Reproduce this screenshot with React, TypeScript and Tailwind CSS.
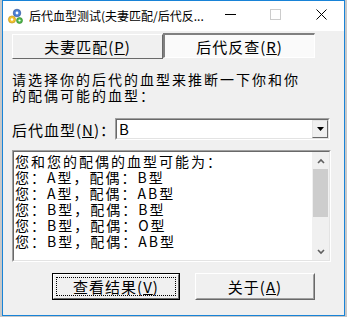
import React from "react";

const font = { fontFamily: '"Noto Sans CJK SC", "Noto Sans", sans-serif' };

function GearsIcon() {
  return (
    <svg width="17" height="17" viewBox="0 0 17 17">
      <g fill="#f2c12e" stroke="#b08a10" strokeWidth="0.6">
        <circle cx="5" cy="11.5" r="3.6" />
      </g>
      <circle cx="5" cy="11.5" r="1.3" fill="#fff" />
      <g fill="#4b7fd6" stroke="#2a4f94" strokeWidth="0.6">
        <circle cx="10" cy="5" r="3.8" />
      </g>
      <circle cx="10" cy="5" r="1.4" fill="#fff" />
      <g fill="#4fb84a" stroke="#2c7a28" strokeWidth="0.6">
        <circle cx="12.5" cy="12.5" r="3" />
      </g>
      <circle cx="12.5" cy="12.5" r="1.1" fill="#fff" />
    </svg>
  );
}

function TitleBar() {
  return (
    <div className="h-[30px] bg-white flex items-center relative">
      <div className="ml-[4px] mt-[1px]">
        <GearsIcon />
      </div>
      <span className="ml-[5px] text-[12px] text-black leading-none">
        后代血型测试(夫妻匹配/后代反...
      </span>
      <svg className="absolute left-[222px] top-[9px]" width="12" height="10" viewBox="0 0 12 10">
        <line x1="0" y1="4.5" x2="11" y2="4.5" stroke="#000" strokeWidth="1" />
      </svg>
      <svg className="absolute left-[267px] top-[8px]" width="11" height="11" viewBox="0 0 11 11">
        <rect x="0.5" y="0.5" width="10" height="10" fill="none" stroke="#cccccc" strokeWidth="1" />
      </svg>
      <svg className="absolute left-[313px] top-[8px]" width="11" height="11" viewBox="0 0 11 11">
        <path d="M0.5 0.5 L10.5 10.5 M10.5 0.5 L0.5 10.5" stroke="#000" strokeWidth="1" />
      </svg>
    </div>
  );
}

function Chevron({ up }: { up?: boolean }) {
  return (
    <svg width="8" height="6" viewBox="0 0 8 6">
      <path
        d={up ? "M1 5 L4 2 L7 5" : "M1 1 L4 4 L7 1"}
        fill="none"
        stroke="#606060"
        strokeWidth="1.6"
      />
    </svg>
  );
}

const lines = [
  "您和您的配偶的血型可能为：",
  "您：A型，配偶：B型",
  "您：A型，配偶：AB型",
  "您：B型，配偶：B型",
  "您：B型，配偶：O型",
  "您：B型，配偶：AB型",
];

export default function App() {
  return (
    <div className="w-[347px] h-[317px] bg-[#c8c8c8] pl-[2px] overflow-hidden" style={font}>
      <div className="w-[343px] h-[316px] border border-[#1883d7] bg-[#f0f0f0] flex flex-col">
        <TitleBar />

        <div className="pl-[9px] flex flex-col text-black">
          {/* tabs */}
          <div className="flex mt-[2px] h-[25px]">
            <div className="w-[151px] h-[25px] mt-[1px] border-t border-l border-t-white border-l-white border-b border-r border-b-[#696969] border-r-[#696969] bg-[#f0f0f0] flex items-center justify-center text-[15px] tracking-[1px] leading-none">
              夫妻匹配(<span className="underline">P</span>)
            </div>
            <div className="w-[152px] h-[25px] border-t-2 border-l-2 border-t-[#808080] border-l-[#808080] border-b border-r border-b-white border-r-white bg-[#fafafa] flex items-center justify-center text-[15px] tracking-[1px] leading-none">
              后代反查(<span className="underline">R</span>)
            </div>
          </div>

          {/* prompt */}
          <p className="mt-[13px] text-[14px] tracking-[2px] leading-[16px]">
            请选择你的后代的血型来推断一下你和你
            <br />
            的配偶可能的血型：
          </p>

          {/* combo */}
          <div className="flex items-center mt-[15px] h-[22px]">
            <span className="w-[103px] shrink-0 whitespace-nowrap text-[15px] tracking-[1px] leading-none">
              后代血型(<span className="underline">N</span>)：
            </span>
            <div className="w-[215px] shrink-0 h-[22px] border border-t-[#a0a0a0] border-l-[#a0a0a0] border-b-white border-r-white">
              <div className="h-full border border-t-[#696969] border-l-[#696969] border-b-[#e3e3e3] border-r-[#e3e3e3] bg-white flex">
                <span className="flex-1 pl-[2px] text-[15px] leading-[18px]">B</span>
                <div className="w-[16px] h-full border border-t-[#e3e3e3] border-l-[#e3e3e3] border-b-[#696969] border-r-[#696969] bg-[#f0f0f0] flex items-center justify-center">
                  <svg width="7" height="4" viewBox="0 0 7 4">
                    <path d="M0 0 L7 0 L3.5 4 Z" fill="#000" />
                  </svg>
                </div>
              </div>
            </div>
          </div>

          {/* list */}
          <div className="mt-[10px] w-[319px] h-[112px] border border-t-[#a0a0a0] border-l-[#a0a0a0] border-b-white border-r-white">
            <div className="h-full border border-t-[#696969] border-l-[#696969] border-b-[#e3e3e3] border-r-[#e3e3e3] bg-white flex">
              <div className="flex-1 pl-[1px] pt-[1px]">
                {lines.map((l, i) => (
                  <div key={i} className="text-[14px] tracking-[2px] leading-[16px] whitespace-nowrap">
                    {l}
                  </div>
                ))}
              </div>
              <div className="w-[17px] h-full bg-[#f0f0f0] flex flex-col">
                <div className="h-[17px] flex items-center justify-center">
                  <Chevron up />
                </div>
                <div className="h-[48px] mx-[1px] bg-[#cdcdcd]" />
                <div className="flex-1" />
                <div className="h-[17px] flex items-center justify-center">
                  <Chevron />
                </div>
              </div>
            </div>
          </div>

          {/* buttons */}
          <div className="flex mt-[11px] h-[27px]">
            <div className="ml-[40px] w-[128px] h-[27px] border border-black">
              <div className="h-full border border-t-white border-l-white border-b-[#696969] border-r-[#696969] bg-[#f0f0f0] p-[2px]">
                <div className="h-full border border-dotted border-black flex items-center justify-center text-[15px] tracking-[1px] leading-none">
                  查看结果(<span className="underline">V</span>)
                </div>
              </div>
            </div>
            <div className="ml-[15px] w-[120px] h-[27px] border border-t-white border-l-white border-b-[#696969] border-r-[#696969] bg-[#f0f0f0]">
              <div className="h-full border border-t-[#f0f0f0] border-l-[#f0f0f0] border-b-[#a0a0a0] border-r-[#a0a0a0] flex items-center justify-center text-[15px] tracking-[1px] leading-none">
                关于(<span className="underline">A</span>)
              </div>
            </div>
          </div>
        </div>
      </div>
    </div>
  );
}
